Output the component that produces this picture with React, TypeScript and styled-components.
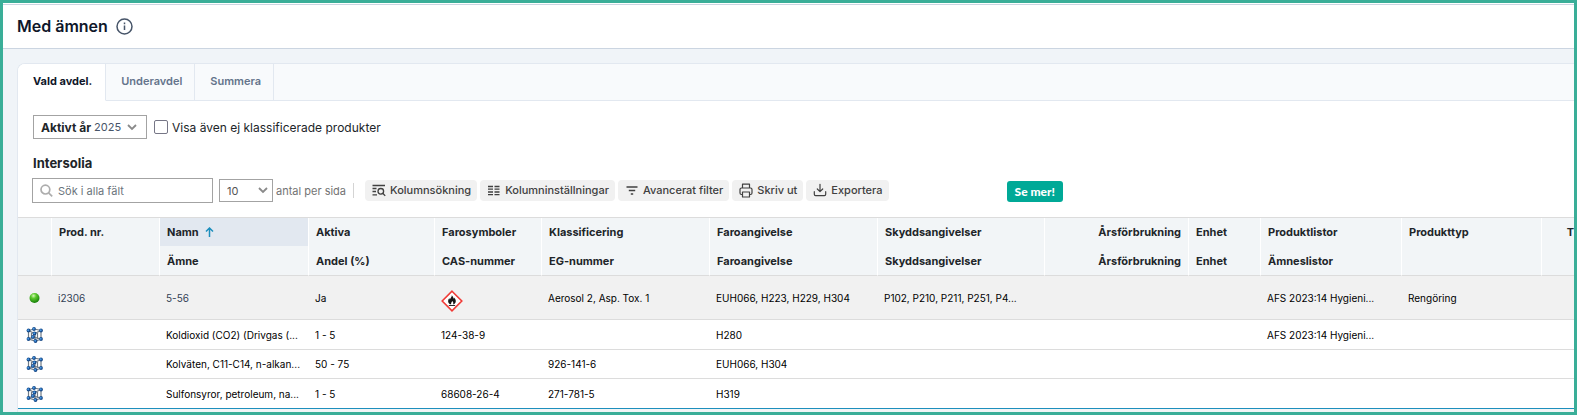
import React from 'react';
import styled, { createGlobalStyle } from 'styled-components';

const GlobalStyle = createGlobalStyle`
  *, *::before, *::after { box-sizing: border-box; }
  body {
    margin: 0;
    font-family: Inter, "Liberation Sans", sans-serif;
    color: #212529;
  }
  button, input, select { font: inherit; color: inherit; }
`;

const Frame = styled.div`
  display: flex;
  flex-direction: column;
  min-height: 100vh;
  border: 3px solid #3aae98;
  background: #f0f4f8;
  overflow: hidden;
`;

const Header = styled.header`
  display: flex;
  align-items: center;
  gap: 8px;
  height: 45px;
  margin-top: 1px;
  padding: 0 14px 1px;
  border-top: 1px solid #cbd5e1;
  border-bottom: 1px solid #cbd5e1;
  background: #fff;
  box-shadow: 0 -1px 0 #fff;
`;

const Title = styled.h1`
  margin: 0;
  font-size: 16px;
  line-height: 20px;
  font-weight: 600;
  color: #0f172a;
`;

const InfoButton = styled.button`
  display: flex;
  padding: 0;
  border: 0;
  background: none;
  color: #475569;
`;

const Card = styled.main`
  flex: 1;
  display: flex;
  flex-direction: column;
  margin: 14px 0 0 14px;
  border: 1px solid #e2e8f0;
  border-width: 1px 0 0 1px;
  border-radius: 8px 0 0 0;
  background: #fff;
  overflow: hidden;
`;

const Tabs = styled.div`
  display: flex;
  height: 37px;
  background: #f8fafc;
`;

const Tab = styled.button<{ $active?: boolean }>`
  padding: 0 ${(p) => (p.$active ? 13 : 12)}px 2px 15px;
  border: 0;
  border-right: 1px solid #e2e8f0;
  border-bottom: 1px solid ${(p) => (p.$active ? '#fff' : '#e2e8f0')};
  background: ${(p) => (p.$active ? '#fff' : 'transparent')};
  color: ${(p) => (p.$active ? '#0f172a' : '#64748b')};
  font-size: 11px;
  font-weight: ${(p) => (p.$active ? 700 : 600)};
`;

const TabFill = styled.div`
  flex: 1;
  border-bottom: 1px solid #e2e8f0;
`;

const Filters = styled.div`
  display: flex;
  align-items: center;
  gap: 7px;
  padding: 14px 15px 0;
`;

const YearField = styled.label`
  display: flex;
  align-items: center;
  gap: 3px;
  height: 24px;
  padding: 0 9px 0 7px;
  border: 1px solid #a3a3a3;
  font-size: 12px;
  font-weight: 700;
`;

const Picker = styled.span`
  display: grid;
  align-items: center;
  > * { grid-area: 1 / 1; }
  > svg { justify-self: end; pointer-events: none; }
`;

const YearSelect = styled.select`
  appearance: none;
  width: 43px;
  padding: 0;
  border: 0;
  background: none;
  font-size: 11px;
  font-weight: 400;
  color: #475569;
`;

const CheckLabel = styled.label`
  display: flex;
  align-items: center;
  gap: 4px;
  font-size: 12px;
  line-height: 16px;
`;

const CheckText = styled.span`
  padding-top: 1px;
`;

const Checkbox = styled.input`
  appearance: none;
  width: 14px;
  height: 14px;
  margin: 0;
  border: 1px solid #767686;
  border-radius: 2px;
  background: #fff;
`;

const SectionTitle = styled.h2`
  margin: 16px 15px 0;
  font-size: 13px;
  line-height: 16px;
  font-weight: 700;
`;

const Toolbar = styled.div`
  display: flex;
  align-items: center;
  padding: 7px 14px 14px;
`;

const Search = styled.label`
  display: flex;
  align-items: center;
  gap: 5px;
  width: 181px;
  height: 25px;
  padding: 0 7px;
  border: 1px solid #a3a3a3;
`;

const SearchInput = styled.input`
  flex: 1;
  min-width: 0;
  padding: 0;
  border: 0;
  outline: 0;
  background: none;
  font-size: 11px;
  &::placeholder { color: #6c757d; opacity: 1; }
`;

const PageSize = styled.label`
  display: flex;
  align-items: center;
  gap: 3px;
  margin-left: 6px;
  font-size: 11px;
  color: #737373;
  > span > svg { margin-right: 5px; }
`;

const SizeSelect = styled.select`
  appearance: none;
  width: 54px;
  height: 23px;
  padding: 0 7px;
  border: 1px solid #a3a3a3;
  border-radius: 0;
  background: none;
  color: #555;
`;

const Divider = styled.span`
  width: 1px;
  height: 15px;
  margin: 0 11px 0 7px;
  background: #d4d4d4;
`;

const Actions = styled.div`
  display: flex;
  gap: 3px;
`;

const Action = styled.button`
  display: flex;
  align-items: center;
  gap: 4px;
  height: 21px;
  padding: 0 6px 1px 7px;
  border: 0;
  border-radius: 4px;
  background: #f1f1f1;
  color: #404040;
  font-size: 11px;
  font-weight: 500;
  white-space: nowrap;
`;

const MoreButton = styled.button`
  height: 21px;
  margin: 2px 0 0 118px;
  padding: 0 8px;
  border: 0;
  border-radius: 3px;
  background: #00a997;
  color: #fff;
  font-family: Lato, "Noto Sans", sans-serif;
  font-size: 12px;
  font-weight: 900;
  white-space: nowrap;
`;

const Table = styled.table`
  width: 100%;
  table-layout: fixed;
  border-collapse: separate;
  border-spacing: 0;
  border-top: 1px solid #dcdcdc;
  border-bottom: 1px solid #1d8fbd;
`;

const Th = styled.th<{ $sorted?: boolean; $end?: boolean; $last?: boolean }>`
  height: ${(p) => (p.$last ? 30 : 28)}px;
  padding: 0 7px;
  border-right: 1px solid #fff;
  border-bottom: ${(p) => (p.$last ? '1px solid #dcdcdc' : '0')};
  background: ${(p) => (p.$sorted ? '#e2e8f0' : '#f2f5f7')};
  background-clip: padding-box;
  font-size: 11px;
  line-height: 14px;
  font-weight: 700;
  text-align: ${(p) => (p.$end ? 'right' : 'left')};
  white-space: nowrap;
  overflow: hidden;
  &:last-child { padding-right: 0; border-right: 0; }
`;

const SortButton = styled.button`
  display: flex;
  align-items: center;
  gap: 6px;
  padding: 0;
  border: 0;
  background: none;
`;

const Row = styled.tr<{ $product?: boolean }>`
  height: ${(p) => (p.$product ? 44 : 30)}px;
  background: ${(p) => (p.$product ? '#f1f1f1' : '#fff')};
  &:nth-child(n + 3) { height: 29px; }
`;

const Td = styled.td`
  padding: 0 6px;
  border-bottom: 1px solid #dcdcdc;
  font-size: 10px;
  line-height: 14px;
  color: #000;
  white-space: nowrap;
  overflow: hidden;
  text-overflow: ellipsis;
  tr:last-child > & { border-bottom: 0; }
  > svg { display: block; }
`;

const IconTd = styled(Td)`
  padding: 0 0 0 8px;
`;

const SymbolTd = styled(Td)`
  padding-top: 6px;
`;

const CellLink = styled.a`
  color: #334155;
  text-decoration: none;
`;

const TableFooter = styled.footer`
  flex: 1;
  min-height: 3px;
  background: #f2f5f6;
`;

const Chevron = () => (
  <svg width="10" height="7" viewBox="0 0 10 7" fill="none" stroke="#8a8a8a" strokeWidth="1.8">
    <path d="M1 1l4 4 4-4" />
  </svg>
);

const InfoIcon = () => (
  <svg width="17" height="17" viewBox="0 0 17 17" fill="none" stroke="currentColor" strokeWidth="1.5">
    <circle cx="8.5" cy="8.5" r="7.5" />
    <path d="M8.5 7.5v4.5M8.5 4.6v1.7" />
  </svg>
);

const SearchIcon = () => (
  <svg width="13" height="13" viewBox="0 0 13 13" fill="none" stroke="#adadad" strokeWidth="1.7">
    <circle cx="5.4" cy="5.6" r="4.4" />
    <path d="M8.6 8.9l3.6 3.4" />
  </svg>
);

const ColumnSearchIcon = () => (
  <svg width="14" height="13" viewBox="0 0 14 13" fill="none" stroke="currentColor" strokeWidth="1.3">
    <path d="M0.5 1.5h12.5M0.5 4.5h4M0.5 7.5h3.5M0.5 10.8h4.5" />
    <circle cx="8.8" cy="7.3" r="2.8" />
    <path d="M10.8 9.3l2.4 2.6" />
  </svg>
);

const ColumnsIcon = () => (
  <svg width="14" height="13" viewBox="0 0 14 13" fill="none" stroke="currentColor" strokeWidth="1.3">
    <path d="M1 2.5h5M1 5.2h5M1 8h5M1 10.7h5M7.5 2.5h5M7.5 5.2h5M7.5 8h5M7.5 10.7h5" />
  </svg>
);

const FilterIcon = () => (
  <svg width="14" height="13" viewBox="0 0 14 13" fill="none" stroke="currentColor" strokeWidth="1.4">
    <path d="M1.5 3h11M3.8 6.5h6.4M5.8 10h2.4" />
  </svg>
);

const PrintIcon = () => (
  <svg width="14" height="15" viewBox="0 0 14 15" fill="none" stroke="currentColor" strokeWidth="1.2" strokeLinejoin="round">
    <path d="M3.5 5V1.2h7V5M3.5 11.5h-1a1.5 1.5 0 0 1-1.5-1.5V6.5A1.5 1.5 0 0 1 2.5 5h9A1.5 1.5 0 0 1 13 6.5V10a1.5 1.5 0 0 1-1.5 1.5h-1M3.5 9h7v5h-7z" />
  </svg>
);

const ExportIcon = () => (
  <svg width="14" height="14" viewBox="0 0 14 14" fill="none" stroke="currentColor" strokeWidth="1.2" strokeLinecap="round" strokeLinejoin="round">
    <path d="M7 1.3v7.2M4.3 6L7 8.7 9.7 6M1.3 8.7v2.6a1.3 1.3 0 0 0 1.3 1.3h8.8a1.3 1.3 0 0 0 1.3-1.3V8.7" />
  </svg>
);

const SortArrow = () => (
  <svg width="9" height="11" viewBox="0 0 9 11" fill="none" stroke="#1d8fbd" strokeWidth="1.5">
    <path d="M4.5 10V1M1 4.5L4.5 1 8 4.5" />
  </svg>
);

const StatusIcon = () => (
  <svg width="17" height="12" viewBox="0 0 17 12" role="img" aria-label="Aktiv">
    <defs>
      <radialGradient id="status" cx="0.4" cy="0.28" r="0.75">
        <stop offset="0" stopColor="#d6f7b8" />
        <stop offset="0.35" stopColor="#5cc92c" />
        <stop offset="1" stopColor="#127a08" />
      </radialGradient>
    </defs>
    <circle cx="8.5" cy="6" r="5" fill="url(#status)" />
  </svg>
);

const moleculeAtoms = [
  [2.5, 3.5], [8, 2], [15, 3.5], [8.5, 6.5],
  [2.5, 12], [7, 10], [15, 12], [9.5, 14],
];

const MoleculeIcon = () => (
  <svg width="17" height="16" viewBox="0 0 17 16" role="img" aria-label="Ämne">
    <path
      d="M2.5 3.500L8 2l7 1.500V12l-5.500 2-7-2zM2.500 3.500l6 3L15 3.500M5.500 4.500V12M11.500 4.500V12M2.500 12L7 10l8 2M9 6.500V14"
      fill="none"
      stroke="#6f7a85"
      strokeWidth="1.2"
    />
    {moleculeAtoms.map(([x, y]) => (
      <g key={`${x}-${y}`}>
        <circle cx={x} cy={y} r="1.9" fill="#174a88" />
        <circle cx={x - 0.3} cy={y - 0.3} r="1" fill="#4595e2" />
      </g>
    ))}
  </svg>
);

const FlameIcon = () => (
  <svg width="22" height="22" viewBox="0 0 22 22" role="img" aria-label="Brandfarlig">
    <path d="M11 1.2L20.8 11 11 20.8 1.2 11z" fill="#fff" stroke="#f03a36" strokeWidth="1.6" />
    <path d="M10.8 5.2c1.800 1.800 1.400 2.800 2.200 3.600.4-.4.4-.9.300-1.400 1.700 2.100 2.400 5-.3 6.800h-1.100c.9-1.200.3-2.300-.7-3.300-.3 1.100-1.500 1.800-1 3.300H9c-2.700-1.700-2-4.700-.6-6.200 0 .6.1 1.100.5 1.400.4-1.300 2-2.200 1.900-4.200z" fill="#161616" />
    <path d="M7.800 15.500h6.400" stroke="#161616" strokeWidth="0.9" />
  </svg>
);

type Column = { width?: number; top: string; bottom: string; end?: boolean; sorted?: boolean };

const columns: Column[] = [
  { width: 34, top: '', bottom: '' },
  { width: 108, top: 'Prod. nr.', bottom: '' },
  { width: 149, top: 'Namn', bottom: 'Ämne', sorted: true },
  { width: 126, top: 'Aktiva', bottom: 'Andel (%)' },
  { width: 107, top: 'Farosymboler', bottom: 'CAS-nummer' },
  { width: 168, top: 'Klassificering', bottom: 'EG-nummer' },
  { width: 168, top: 'Faroangivelse', bottom: 'Faroangivelse' },
  { width: 167, top: 'Skyddsangivelser', bottom: 'Skyddsangivelser' },
  { width: 144, top: 'Årsförbrukning', bottom: 'Årsförbrukning', end: true },
  { width: 72, top: 'Enhet', bottom: 'Enhet' },
  { width: 141, top: 'Produktlistor', bottom: 'Ämneslistor' },
  { width: 140, top: 'Produkttyp', bottom: '' },
  { top: 'T', bottom: '', end: true },
];

const substances = [
  ['', 'Koldioxid (CO2) (Drivgas (...', '1 - 5', '124-38-9', '', 'H280', '', '', '', 'AFS 2023:14 Hygieni...', '', ''],
  ['', 'Kolväten, C11-C14, n-alkan...', '50 - 75', '', '926-141-6', 'EUH066, H304', '', '', '', '', '', ''],
  ['', 'Sulfonsyror, petroleum, na...', '1 - 5', '68608-26-4', '271-781-5', 'H319', '', '', '', '', '', ''],
];

const actions = [
  { label: 'Kolumnsökning', icon: <ColumnSearchIcon /> },
  { label: 'Kolumninställningar', icon: <ColumnsIcon /> },
  { label: 'Avancerat filter', icon: <FilterIcon /> },
  { label: 'Skriv ut', icon: <PrintIcon /> },
  { label: 'Exportera', icon: <ExportIcon /> },
];

export default function App() {
  return (
    <Frame>
      <GlobalStyle />
      <Header>
        <Title>Med ämnen</Title>
        <InfoButton aria-label="Information"><InfoIcon /></InfoButton>
      </Header>
      <Card>
        <Tabs role="tablist">
          <Tab role="tab" aria-selected="true" $active>Vald avdel.</Tab>
          <Tab role="tab" aria-selected="false">Underavdel</Tab>
          <Tab role="tab" aria-selected="false">Summera</Tab>
          <TabFill />
        </Tabs>
        <Filters>
          <YearField>
            Aktivt år
            <Picker>
              <YearSelect defaultValue="2025"><option>2025</option></YearSelect>
              <Chevron />
            </Picker>
          </YearField>
          <CheckLabel>
            <Checkbox type="checkbox" />
            <CheckText>Visa även ej klassificerade produkter</CheckText>
          </CheckLabel>
        </Filters>
        <SectionTitle>Intersolia</SectionTitle>
        <Toolbar>
          <Search>
            <SearchIcon />
            <SearchInput type="text" placeholder="Sök i alla fält" aria-label="Sök i alla fält" />
          </Search>
          <PageSize>
            <Picker>
              <SizeSelect defaultValue="10"><option>10</option></SizeSelect>
              <Chevron />
            </Picker>
            antal per sida
          </PageSize>
          <Divider />
          <Actions>
            {actions.map((a) => (
              <Action key={a.label}>{a.icon}{a.label}</Action>
            ))}
          </Actions>
          <MoreButton>Se mer!</MoreButton>
        </Toolbar>
        <Table>
          <colgroup>
            {columns.map((c, i) => <col key={i} width={c.width} />)}
          </colgroup>
          <thead>
            <tr>
              {columns.map((c, i) => (
                <Th key={i} $sorted={c.sorted} $end={c.end} aria-sort={c.sorted ? 'ascending' : undefined}>
                  {c.sorted ? <SortButton>{c.top}<SortArrow /></SortButton> : c.top}
                </Th>
              ))}
            </tr>
            <tr>
              {columns.map((c, i) => <Th key={i} $end={c.end} $last>{c.bottom}</Th>)}
            </tr>
          </thead>
          <tbody>
            <Row $product>
              <IconTd><StatusIcon /></IconTd>
              <Td><CellLink href="#i2306">i2306</CellLink></Td>
              <Td><CellLink href="#i2306">5-56</CellLink></Td>
              <Td>Ja</Td>
              <SymbolTd><FlameIcon /></SymbolTd>
              <Td>Aerosol 2, Asp. Tox. 1</Td>
              <Td>EUH066, H223, H229, H304</Td>
              <Td>P102, P210, P211, P251, P4...</Td>
              <Td />
              <Td />
              <Td>AFS 2023:14 Hygieni...</Td>
              <Td>Rengöring</Td>
              <Td />
            </Row>
            {substances.map((cells) => (
              <Row key={cells[1]}>
                <IconTd><MoleculeIcon /></IconTd>
                {cells.map((text, i) => <Td key={i}>{text}</Td>)}
              </Row>
            ))}
          </tbody>
        </Table>
        <TableFooter />
      </Card>
    </Frame>
  );
}
